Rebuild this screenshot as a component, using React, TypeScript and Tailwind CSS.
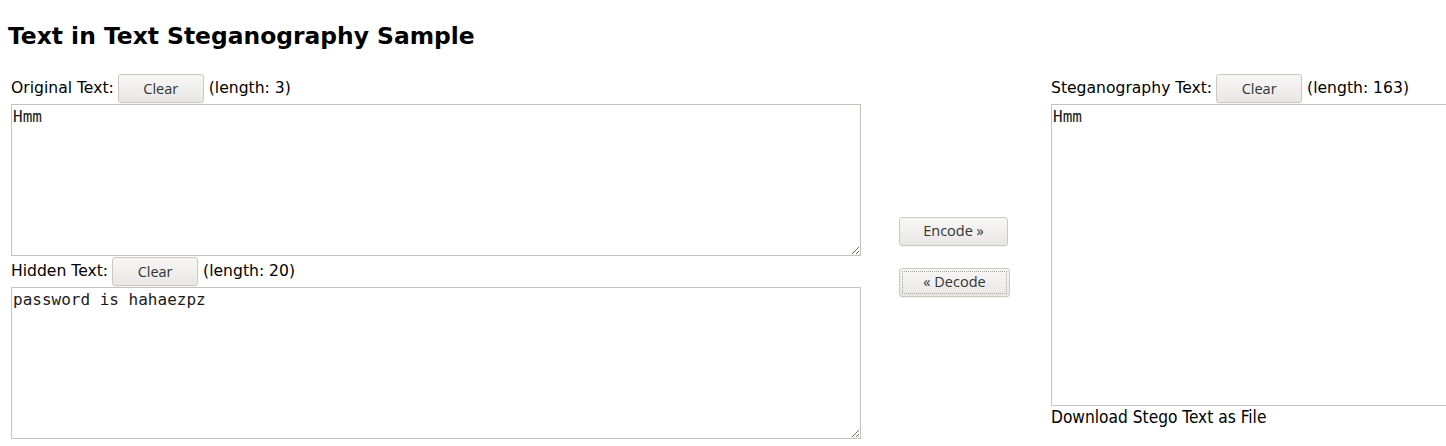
import { useState } from 'react'

const btn =
  'h-[29px] shrink-0 rounded-[3px] border border-[#cdc7c2] bg-linear-to-b from-[#f8f7f6] to-[#e9e7e5] text-[14.5px] text-[#2e3436] shadow-[0_1px_0_rgba(0,0,0,0.04)] [font-family:"Open_Sans",sans-serif]'

const area =
  'block resize rounded-none border border-[#c6c2bd] bg-white px-[1px] py-[2px] text-[16px] leading-[19px] text-[#1a1a1a] outline-none [font-family:"DejaVu_Sans_Mono",monospace]'

function LabelRow({ label, length, onClear }: { label: string; length: number; onClear: () => void }) {
  return (
    <div className="flex h-[29px] items-center gap-[4px] whitespace-nowrap">
      <span className="pt-[1px]">{label}</span>
      <button className={`${btn} w-[86px]`} onClick={onClear}>
        Clear
      </button>
      <span className="ml-[1px] pt-[1px]">(length: {length})</span>
    </div>
  )
}

export default function App() {
  const [original, setOriginal] = useState('Hmm')
  const [hidden, setHidden] = useState('password is hahaezpz')
  const [stego, setStego] = useState('Hmm')

  return (
    <div className="h-[446px] w-full overflow-hidden bg-white px-[8px] text-[15.6px] text-black [font-family:'DejaVu_Sans',sans-serif]">
      <h1 className="mt-[22px] text-[23.4px] leading-[28px] font-bold">Text in Text Steganography Sample</h1>

      <div className="mt-[24px] flex pl-[3px]">
        <div className="flex w-[850px] shrink-0 flex-col gap-[1px]">
          <LabelRow label="Original Text:" length={original.length} onClear={() => setOriginal('')} />
          <textarea
            className={`${area} h-[152px] w-[850px]`}
            value={original}
            onChange={(e) => setOriginal(e.target.value)}
          />
          <LabelRow label="Hidden Text:" length={hidden.length} onClear={() => setHidden('')} />
          <textarea
            className={`${area} h-[152px] w-[850px]`}
            value={hidden}
            onChange={(e) => setHidden(e.target.value)}
          />
        </div>

        <div className="flex w-[190px] shrink-0 flex-col justify-center gap-[22px] pl-[38px]">
          <button className={`${btn} w-[109px]`}>Encode »</button>
          <button className={`${btn} w-[111px] outline-1 -outline-offset-4 outline-[#a8a4a0] outline-dotted`}>
            « Decode
          </button>
        </div>

        <div className="flex shrink-0 flex-col gap-[1px]">
          <LabelRow label="Steganography Text:" length={163} onClear={() => setStego('')} />
          <textarea
            className={`${area} h-[302px] w-[850px]`}
            value={stego}
            onChange={(e) => setStego(e.target.value)}
          />
          <div className="mt-[1px] text-[17.2px] leading-[19px] font-stretch-condensed">Download Stego Text as File</div>
        </div>
      </div>
    </div>
  )
}
